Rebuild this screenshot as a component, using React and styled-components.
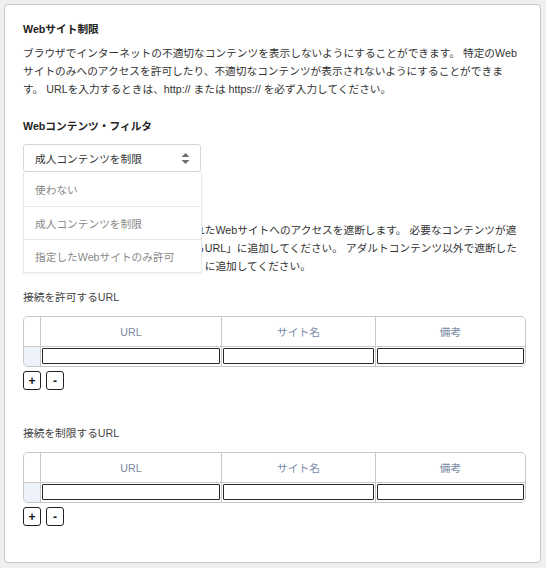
import styled, { createGlobalStyle } from 'styled-components';

const GlobalStyle = createGlobalStyle`
  html, body {
    margin: 0;
    padding: 0;
    background-color: rgb(239, 239, 239);
  }
  body {
    font-family: "Liberation Sans", "Noto Sans CJK JP", sans-serif;
    font-size: 10.7px;
    color: rgb(51, 51, 51);
    text-spacing-trim: space-all;
  }
`;

const Page = styled.div`
  padding: 4px 5px 7px 4px;
`;

const Card = styled.div`
  background-color: white;
  border: 1px solid rgb(198, 198, 198);
  border-radius: 4px;
  padding: 15px 14px 36px 18px;
`;

const Heading = styled.h2`
  margin: 0;
  font-size: 10.7px;
  font-weight: 700;
  line-height: 18px;
  color: rgb(34, 34, 34);
`;

const SubHeading = styled(Heading)`
  margin-top: 19px;
`;

const Text = styled.p`
  margin: ${(props) => props.top || 0}px 0 0;
  width: 500px;
  line-height: 18px;
`;

const SelectWrap = styled.div`
  position: relative;
  margin-top: 9px;
  width: 178px;
`;

const SelectBox = styled.div`
  box-sizing: border-box;
  height: 28px;
  display: flex;
  align-items: center;
  justify-content: space-between;
  padding: 0 10px 0 11px;
  border: 1px solid rgb(214, 214, 214);
  border-radius: 3px;
  box-shadow: 0 1px 1px rgba(0, 0, 0, 0.08);
  color: rgb(51, 51, 51);
`;

const Menu = styled.ul`
  position: absolute;
  top: 100%;
  left: 0;
  width: 179px;
  box-sizing: border-box;
  margin: 0;
  padding: 0;
  list-style: none;
  background-color: white;
  border: 1px solid rgb(232, 232, 232);
  border-top: none;
  box-shadow: 0 1px 2px rgba(0, 0, 0, 0.06);
  z-index: 2;
`;

const MenuItem = styled.li`
  display: flex;
  align-items: center;
  padding-left: 11px;
  color: rgb(136, 136, 136);
  border-top: ${(props) => (props.first ? 'none' : '1px solid rgb(230, 230, 230)')};
  box-sizing: border-box;
  height: ${(props) => (props.first ? 34 : 33)}px;
`;

const Section = styled.div`
  margin-top: ${(props) => props.top}px;
`;

const Label = styled.div`
  line-height: 18px;
  color: rgb(68, 68, 68);
`;

const Grid = styled.div`
  margin-top: 10px;
  display: grid;
  grid-template-columns: 16px 180px 153px 1fr;
  grid-template-rows: 29px 19px;
  gap: 1px;
  background-color: rgb(200, 200, 200);
  border: 1px solid rgb(200, 200, 200);
  border-radius: 5px;
  overflow: hidden;
`;

const HeadCell = styled.div`
  background-color: white;
  display: flex;
  align-items: center;
  justify-content: center;
  color: rgb(122, 138, 165);
`;

const RowHead = styled.div`
  background-color: rgb(238, 243, 251);
`;

const InputCell = styled.div`
  background-color: white;
  padding: 1px 1px 2px 1px;
  display: flex;
`;

const Field = styled.input`
  flex: 1;
  min-width: 0;
  box-sizing: border-box;
  height: 16px;
  margin: 0;
  padding: 0 2px;
  border: 1px solid rgb(40, 40, 40);
  border-radius: 1px;
  font-size: 10.7px;
`;

const Buttons = styled.div`
  margin-top: 4px;
  display: flex;
  gap: 5px;
`;

const SmallButton = styled.button`
  width: 18px;
  height: 19px;
  padding: 0;
  display: flex;
  align-items: center;
  justify-content: center;
  background: white;
  border: 1px solid rgb(34, 34, 34);
  border-radius: 3px;
  font-family: "Liberation Sans", sans-serif;
  font-size: 12px;
  font-weight: 700;
  color: rgb(20, 20, 20);
`;

const Arrows = () => (
  <svg width="9" height="11" viewBox="0 0 9 11">
    <path d="M4.5 0 L8.5 4 L0.5 4 Z" fill="rgb(110,110,110)" />
    <path d="M0.5 7 L8.5 7 L4.5 11 Z" fill="rgb(110,110,110)" />
  </svg>
);

const UrlTable = ({ label, top }) => (
  <Section top={top}>
    <Label>{label}</Label>
    <Grid>
      <HeadCell />
      <HeadCell>URL</HeadCell>
      <HeadCell>サイト名</HeadCell>
      <HeadCell>備考</HeadCell>
      <RowHead />
      <InputCell>
        <Field />
      </InputCell>
      <InputCell>
        <Field />
      </InputCell>
      <InputCell>
        <Field />
      </InputCell>
    </Grid>
    <Buttons>
      <SmallButton>+</SmallButton>
      <SmallButton>-</SmallButton>
    </Buttons>
  </Section>
);

const options = ['使わない', '成人コンテンツを制限', '指定したWebサイトのみ許可'];

export default function App() {
  return (
    <Page>
      <GlobalStyle />
      <Card>
        <Heading>Webサイト制限</Heading>
        <Text top={6}>
          ブラウザでインターネットの不適切なコンテンツを表示しないようにすることができます。 特定のWebサイトのみへのアクセスを許可したり、不適切なコンテンツが表示されないようにすることができます。 URLを入力するときは、http:// または https:// を必ず入力してください。
        </Text>
        <SubHeading>Webコンテンツ・フィルタ</SubHeading>
        <SelectWrap>
          <SelectBox>
            <span>成人コンテンツを制限</span>
            <Arrows />
          </SelectBox>
          <Menu>
            {options.map((o, i) => (
              <MenuItem key={o} first={i === 0}>
                {o}
              </MenuItem>
            ))}
          </Menu>
        </SelectWrap>
        <Text top={49}>
          アダルトサイトなど不適切と判断されたWebサイトへのアクセスを遮断します。 必要なコンテンツが遮断される場合には、「接続を許可するURL」に追加してください。 アダルトコンテンツ以外で遮断したいサイトは、「接続を制限するURL」に追加してください。
        </Text>
        <UrlTable label="接続を許可するURL" top={13} />
        <UrlTable label="接続を制限するURL" top={34} />
      </Card>
    </Page>
  );
}
